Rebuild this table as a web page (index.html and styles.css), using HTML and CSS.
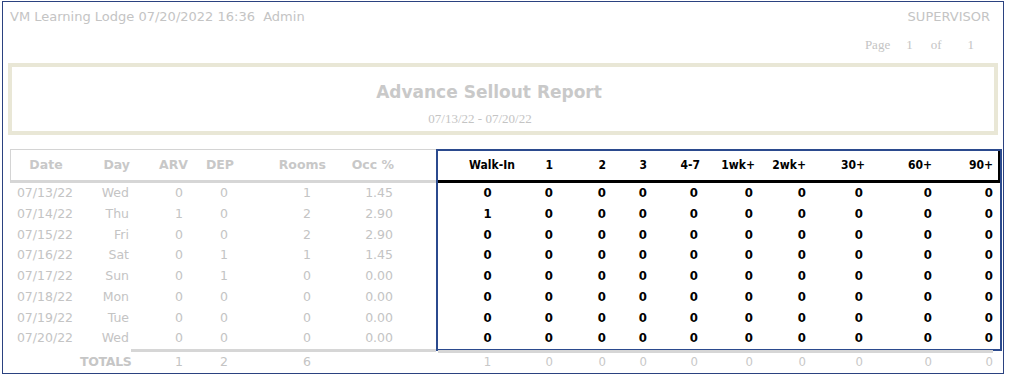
FILE: index.html
```html
<!DOCTYPE html>
<html>
<head>
<meta charset="utf-8">
<link rel="stylesheet" href="styles.css">
</head>
<body>
<div class="page">
  <div class="topbar"><span>VM Learning Lodge 07/20/2022 16:36&nbsp; Admin</span><span>SUPERVISOR</span></div>
  <div class="pager"><span class="p-word">Page</span><span class="p-num">1</span><span class="p-of">of</span><span class="p-tot">1</span></div>
  <div class="titlebox">
    <div class="title">Advance Sellout Report</div>
    <div class="range">07/13/22 - 07/20/22</div>
  </div>
  <div class="report">
    <div class="left">
      <div class="row head"><div>Date</div><div>Day</div><div>ARV</div><div>DEP</div><div>Rooms</div><div>Occ %</div><div></div></div>
      <div class="row"><div>07/13/22</div><div>Wed</div><div>0</div><div>0</div><div>1</div><div>1.45</div><div></div></div>
      <div class="row"><div>07/14/22</div><div>Thu</div><div>1</div><div>0</div><div>2</div><div>2.90</div><div></div></div>
      <div class="row"><div>07/15/22</div><div>Fri</div><div>0</div><div>0</div><div>2</div><div>2.90</div><div></div></div>
      <div class="row"><div>07/16/22</div><div>Sat</div><div>0</div><div>1</div><div>1</div><div>1.45</div><div></div></div>
      <div class="row"><div>07/17/22</div><div>Sun</div><div>0</div><div>1</div><div>0</div><div>0.00</div><div></div></div>
      <div class="row"><div>07/18/22</div><div>Mon</div><div>0</div><div>0</div><div>0</div><div>0.00</div><div></div></div>
      <div class="row"><div>07/19/22</div><div>Tue</div><div>0</div><div>0</div><div>0</div><div>0.00</div><div></div></div>
      <div class="row"><div>07/20/22</div><div>Wed</div><div>0</div><div>0</div><div>0</div><div>0.00</div><div></div></div>
      <div class="row totals"><div></div><div class="tlabel">TOTALS</div><div class="tb">1</div><div class="tb">2</div><div class="tb">6</div><div class="tb"></div><div class="tb"></div></div>
    </div>
    <div class="right">
      <div class="hilite">
        <div class="row head"><div>Walk-In</div><div>1</div><div>2</div><div>3</div><div>4-7</div><div>1wk+</div><div>2wk+</div><div>30+</div><div>60+</div><div>90+</div></div>
        <div class="row"><div>0</div><div>0</div><div>0</div><div>0</div><div>0</div><div>0</div><div>0</div><div>0</div><div>0</div><div>0</div></div>
        <div class="row"><div>1</div><div>0</div><div>0</div><div>0</div><div>0</div><div>0</div><div>0</div><div>0</div><div>0</div><div>0</div></div>
        <div class="row"><div>0</div><div>0</div><div>0</div><div>0</div><div>0</div><div>0</div><div>0</div><div>0</div><div>0</div><div>0</div></div>
        <div class="row"><div>0</div><div>0</div><div>0</div><div>0</div><div>0</div><div>0</div><div>0</div><div>0</div><div>0</div><div>0</div></div>
        <div class="row"><div>0</div><div>0</div><div>0</div><div>0</div><div>0</div><div>0</div><div>0</div><div>0</div><div>0</div><div>0</div></div>
        <div class="row"><div>0</div><div>0</div><div>0</div><div>0</div><div>0</div><div>0</div><div>0</div><div>0</div><div>0</div><div>0</div></div>
        <div class="row"><div>0</div><div>0</div><div>0</div><div>0</div><div>0</div><div>0</div><div>0</div><div>0</div><div>0</div><div>0</div></div>
        <div class="row"><div>0</div><div>0</div><div>0</div><div>0</div><div>0</div><div>0</div><div>0</div><div>0</div><div>0</div><div>0</div></div>
      </div>
      <div class="row totals"><div>1</div><div>0</div><div>0</div><div>0</div><div>0</div><div>0</div><div>0</div><div>0</div><div>0</div><div>0</div></div>
    </div>
  </div>
</div>
</body>
</html>
```

FILE: styles.css
```css
html, body {
  margin: 0;
  padding: 0;
  background: #ffffff;
}
body {
  font-family: "DejaVu Sans", Verdana, sans-serif;
  color: #c2c2c2;
}
.page {
  box-sizing: border-box;
  margin: 1px 0 0 2px;
  width: 1002px;
  height: 373px;
  border: 1px solid #2b4280;
  overflow: hidden;
}
.topbar {
  display: flex;
  justify-content: space-between;
  margin-top: 6px;
  padding: 0 13px 0 7px;
  height: 18px;
  line-height: 18px;
  font-size: 13px;
  color: #c4c4c4;
}
.pager {
  display: flex;
  justify-content: flex-end;
  margin-top: 11px;
  padding-right: 29px;
  height: 16px;
  line-height: 16px;
  font-family: "Liberation Serif", "Times New Roman", serif;
  font-size: 13px;
  color: #c4c4c4;
}
.p-num { margin-left: 16px; }
.p-of { margin-left: 18px; }
.p-tot { margin-left: 26px; }
.titlebox {
  box-sizing: border-box;
  margin: 10px 0 0 5px;
  width: 990px;
  height: 72px;
  border: 4px solid #e9e7d6;
  text-align: center;
}
.title {
  padding: 14px 28px 0 0;
  height: 22px;
  line-height: 22px;
  font-size: 17px;
  font-weight: bold;
  color: #c9c9c9;
}
.range {
  margin-top: 8px;
  padding-right: 46px;
  line-height: 16px;
  font-family: "Liberation Serif", "Times New Roman", serif;
  font-size: 13px;
  color: #c4c4c4;
}
.report {
  display: flex;
  margin: 14px 0 0 7px;
}
.left {
  width: 426px;
  font-size: 12.5px;
  color: #c4c4c4;
}
.left .row {
  display: grid;
  grid-template-columns: 70px 51px 58px 46px 92px 68px 41px;
}
.row {
  height: 20.75px;
  line-height: 20.75px;
}
.row > div {
  text-align: right;
  padding-right: 2px;
  white-space: nowrap;
}
.left .row > div:nth-child(1) { text-align: center; padding-right: 0; }
.left .row > div:nth-child(3) { padding-right: 6px; }
.left .row > div:nth-child(4) { padding-right: 7px; }
.left .row > div:nth-child(5) { padding-right: 16px; }
.left .row.head {
  box-sizing: border-box;
  height: 34px;
  line-height: 30px;
  border-top: 1px solid #d4d4d4;
  border-left: 1px solid #d4d4d4;
  border-bottom: 3px solid #d6d6d6;
  font-weight: bold;
  color: #c8c8c8;
}
.left .row.head > div { padding-right: 2px; }
.left .row.head > div:nth-child(1) { text-align: center; padding-right: 0; }
.left .totals {
  box-sizing: border-box;
  height: 21px;
  line-height: 20px;
}
.left .totals > .tb {
  border-top: 3px solid #d6d6d6;
}
.left .totals > .tlabel {
  padding-top: 3px;
  padding-right: 0;
  font-weight: bold;
  letter-spacing: -0.3px;
  color: #c6c6c6;
}
.right {
  width: 566px;
  font-size: 13px;
}
.hilite {
  border: 2px solid #2b4a8e;
  color: #000000;
  font-family: "DejaVu Sans Condensed", "DejaVu Sans", sans-serif;
  font-weight: bold;
}
.right .row {
  display: grid;
  grid-template-columns: 99px 18px 53px 41px 51px 55px 53px 57px 69px 66px;
}
.right .row > div:nth-child(1) { text-align: center; padding-right: 0; }
.right .row > div:nth-child(10) { padding-right: 7px; }
.right .row.head {
  box-sizing: border-box;
  height: 32px;
  line-height: 29px;
  border-bottom: 3px solid #000000;
  font-size: 12px;
}
.right .row.head > div:nth-child(1) { padding-left: 9px; }
.right .row.head > div:nth-child(5),
.right .row.head > div:nth-child(6),
.right .row.head > div:nth-child(8) { padding-right: 0; }
.right .row.head > div:nth-child(10) {
  padding-right: 5px;
  border-right: 2px solid #000000;
}
.right .totals {
  box-sizing: border-box;
  margin-top: -1px;
  padding-left: 2px;
  height: 21px;
  line-height: 18px;
  color: #c8c8c8;
  font-family: "DejaVu Sans Condensed", "DejaVu Sans", sans-serif;
}
.right .totals > div {
  border-top: 3px solid #d6d6d6;
}
.right .totals > div:nth-child(10) {
  margin-right: 7px;
  padding-right: 0;
}
```
